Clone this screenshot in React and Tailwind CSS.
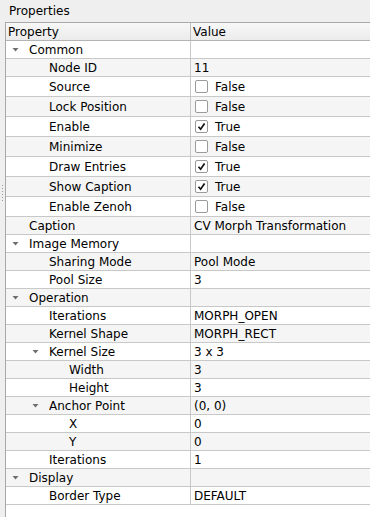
import React from 'react';

const rows = [
  { label: 'Common', level: 0, arrow: true },
  { label: 'Node ID', level: 1, value: '11' },
  { label: 'Source', level: 1, check: false },
  { label: 'Lock Position', level: 1, check: false },
  { label: 'Enable', level: 1, check: true },
  { label: 'Minimize', level: 1, check: false },
  { label: 'Draw Entries', level: 1, check: true },
  { label: 'Show Caption', level: 1, check: true },
  { label: 'Enable Zenoh', level: 1, check: false },
  { label: 'Caption', level: 0, value: 'CV Morph Transformation' },
  { label: 'Image Memory', level: 0, arrow: true },
  { label: 'Sharing Mode', level: 1, value: 'Pool Mode' },
  { label: 'Pool Size', level: 1, value: '3' },
  { label: 'Operation', level: 0, arrow: true },
  { label: 'Iterations', level: 1, value: 'MORPH_OPEN' },
  { label: 'Kernel Shape', level: 1, value: 'MORPH_RECT' },
  { label: 'Kernel Size', level: 1, arrow: true, value: '3 x 3' },
  { label: 'Width', level: 2, value: '3' },
  { label: 'Height', level: 2, value: '3' },
  { label: 'Anchor Point', level: 1, arrow: true, value: '(0, 0)' },
  { label: 'X', level: 2, value: '0' },
  { label: 'Y', level: 2, value: '0' },
  { label: 'Iterations', level: 1, value: '1' },
  { label: 'Display', level: 0, arrow: true },
  { label: 'Border Type', level: 1, value: 'DEFAULT' },
];

const pad = ['pl-[3px]', 'pl-[23px]', 'pl-[43px]'];

function Arrow() {
  return (
    <svg width="20" height="6" viewBox="0 0 20 6" className="shrink-0">
      <path d="M3.5 1 L9.5 1 L6.5 4.5 Z" fill="#6e6e6e" />
    </svg>
  );
}

function Check({ on }) {
  return (
    <span className="w-[13px] h-[13px] bg-white border border-[#9a9a9a] rounded-[2px] flex items-center justify-center shrink-0">
      {on && (
        <svg width="9" height="9" viewBox="0 0 9 9">
          <path d="M1.5 4.8 L3.6 7.2 L7.6 1.6" stroke="#111" strokeWidth="1.7" fill="none" />
        </svg>
      )}
    </span>
  );
}

function Row({ row, index }) {
  const bg = index % 2 === 1 ? 'bg-[#f5f5f5]' : 'bg-white';
  const h = row.check !== undefined ? 'h-[20px]' : 'h-[18px]';
  return (
    <div className={`flex ${h} ${bg} border-b border-[#c8c8c8]`}>
      <div className={`w-[184px] shrink-0 flex items-center ${pad[row.level]}`}>
        {row.arrow ? <Arrow /> : <span className="w-[20px] shrink-0" />}
        <span>{row.label}</span>
      </div>
      <div className="flex-1 flex items-center border-l border-[#c8c8c8] pl-[3px]">
        {row.check !== undefined ? (
          <div className="flex items-center gap-[7px] pl-[1px]">
            <Check on={row.check} />
            <span>{row.check ? 'True' : 'False'}</span>
          </div>
        ) : (
          <span>{row.value}</span>
        )}
      </div>
    </div>
  );
}

export default function App() {
  return (
    <div className="w-[370px] h-[517px] bg-[#efefef] flex flex-col overflow-hidden text-[12px] text-black font-['DejaVu_Sans',sans-serif] leading-none">
      <div className="h-[22px] pl-[9px] flex items-center">Properties</div>

      <div className="flex flex-1 min-h-0">
        {/* splitter handle */}
        <div className="w-[5px] shrink-0 flex flex-col items-center pt-[163px] gap-[2px] pr-[1px]">
          {[0, 1, 2, 3, 4, 5].map((i) => (
            <span key={i} className="w-[1px] h-[1px] bg-[#9a9a9a]" />
          ))}
        </div>

        <div className="flex-1 flex flex-col border-l border-t border-[#a8a8a8] bg-white">
          <div className="flex h-[18px] bg-gradient-to-b from-[#f8f8f8] to-[#ebebeb] border-b border-[#b4b4b4] shrink-0">
            <div className="w-[184px] shrink-0 flex items-center pl-[2px]">Property</div>
            <div className="flex-1 flex items-center border-l border-[#c0c0c0] pl-[2px]">Value</div>
          </div>
          {rows.map((row, i) => (
            <Row key={i} row={row} index={i} />
          ))}
        </div>
      </div>
    </div>
  );
}
